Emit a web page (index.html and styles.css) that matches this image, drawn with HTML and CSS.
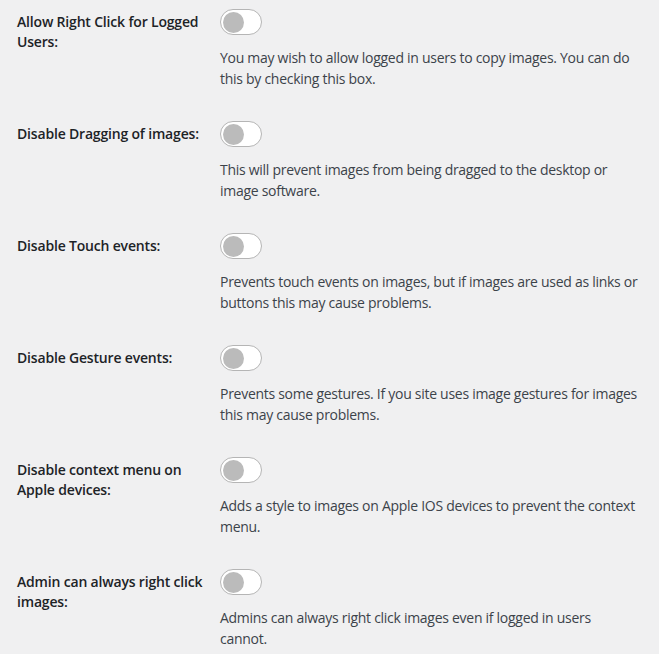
FILE: index.html
```html
<!DOCTYPE html>
<html lang="en">
<head>
<meta charset="utf-8">
<title>Image protection settings</title>
<link rel="stylesheet" href="styles.css">
</head>
<body>
<div class="settings">
  <div class="row">
    <div class="label">Allow Right Click for Logged<br>Users:</div>
    <div class="field">
      <span class="toggle"><span class="knob"></span></span>
      <p class="desc">You may wish to allow logged in users to copy images. You can do<br>this by checking this box.</p>
    </div>
  </div>
  <div class="row">
    <div class="label">Disable Dragging of images:</div>
    <div class="field">
      <span class="toggle"><span class="knob"></span></span>
      <p class="desc">This will prevent images from being dragged to the desktop or<br>image software.</p>
    </div>
  </div>
  <div class="row">
    <div class="label">Disable Touch events:</div>
    <div class="field">
      <span class="toggle"><span class="knob"></span></span>
      <p class="desc">Prevents touch events on images, but if images are used as links or<br>buttons this may cause problems.</p>
    </div>
  </div>
  <div class="row">
    <div class="label">Disable Gesture events:</div>
    <div class="field">
      <span class="toggle"><span class="knob"></span></span>
      <p class="desc">Prevents some gestures. If you site uses image gestures for images<br>this may cause problems.</p>
    </div>
  </div>
  <div class="row">
    <div class="label">Disable context menu on<br>Apple devices:</div>
    <div class="field">
      <span class="toggle"><span class="knob"></span></span>
      <p class="desc">Adds a style to images on Apple IOS devices to prevent the context<br>menu.</p>
    </div>
  </div>
  <div class="row">
    <div class="label">Admin can always right click<br>images:</div>
    <div class="field">
      <span class="toggle"><span class="knob"></span></span>
      <p class="desc">Admins can always right click images even if logged in users<br>cannot.</p>
    </div>
  </div>
</div>
</body>
</html>
```
FILE: styles.css
```css
html, body {
  margin: 0;
  padding: 0;
  background: #f0f0f1;
}
body {
  font-family: "Open Sans", "Noto Sans", sans-serif;
  color: #3c434a;
}
.settings {
  display: flex;
  flex-direction: column;
}
.row {
  display: grid;
  grid-template-columns: 220px 1fr;
  padding: 9px 0 23px;
}
.label {
  padding: 3px 0 0 17px;
  font-size: 14px;
  line-height: 19.5px;
  font-weight: 600;
  letter-spacing: -0.18px;
  color: #1d2327;
  white-space: nowrap;
}
.field {
  display: flex;
  flex-direction: column;
  align-items: flex-start;
}
.toggle {
  box-sizing: border-box;
  display: flex;
  align-items: center;
  width: 42px;
  height: 26px;
  padding: 0 2px;
  border: 1px solid #b5b5b5;
  border-radius: 13px;
  background: #fff;
}
.knob {
  width: 21px;
  height: 21px;
  border-radius: 50%;
  background: #bbbbbb;
}
.desc {
  margin: 12px 0 0;
  font-size: 14px;
  line-height: 21px;
  letter-spacing: -0.28px;
  white-space: nowrap;
}
```
